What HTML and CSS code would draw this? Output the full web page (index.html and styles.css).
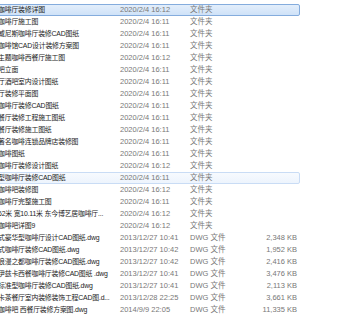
FILE: index.html
```html
<!DOCTYPE html>
<html lang="zh-CN">
<head>
    <meta charset="UTF-8">
    <title>咖啡厅图纸</title>
    <link rel="stylesheet" href="styles.css">
</head>
<body>
    <div class="file-list">
        <div class="row selected"><span class="name">咖啡厅装修详图</span><span class="date">2020/2/4 16:12</span><span class="type">文件夹</span><span class="size"></span></div>
        <div class="row"><span class="name">咖啡厅施工图</span><span class="date">2020/2/4 16:11</span><span class="type">文件夹</span><span class="size"></span></div>
        <div class="row"><span class="name">威尼斯咖啡厅装修CAD图纸</span><span class="date">2020/2/4 16:11</span><span class="type">文件夹</span><span class="size"></span></div>
        <div class="row"><span class="name">咖啡馆CAD设计装修方案图</span><span class="date">2020/2/4 16:11</span><span class="type">文件夹</span><span class="size"></span></div>
        <div class="row"><span class="name">主题咖啡西餐厅施工图</span><span class="date">2020/2/4 16:12</span><span class="type">文件夹</span><span class="size"></span></div>
        <div class="row"><span class="name">吧立面</span><span class="date">2020/2/4 16:11</span><span class="type">文件夹</span><span class="size"></span></div>
        <div class="row"><span class="name">厅酒吧室内设计图纸</span><span class="date">2020/2/4 16:11</span><span class="type">文件夹</span><span class="size"></span></div>
        <div class="row"><span class="name">厅装修平面图</span><span class="date">2020/2/4 16:11</span><span class="type">文件夹</span><span class="size"></span></div>
        <div class="row"><span class="name">咖啡厅装修CAD图纸</span><span class="date">2020/2/4 16:11</span><span class="type">文件夹</span><span class="size"></span></div>
        <div class="row"><span class="name">餐厅装修工程施工图纸</span><span class="date">2020/2/4 16:11</span><span class="type">文件夹</span><span class="size"></span></div>
        <div class="row"><span class="name">餐厅装修施工图纸</span><span class="date">2020/2/4 16:11</span><span class="type">文件夹</span><span class="size"></span></div>
        <div class="row"><span class="name">著名咖啡连锁品牌店装修图</span><span class="date">2020/2/4 16:11</span><span class="type">文件夹</span><span class="size"></span></div>
        <div class="row"><span class="name">咖啡图纸</span><span class="date">2020/2/4 16:11</span><span class="type">文件夹</span><span class="size"></span></div>
        <div class="row"><span class="name">咖啡厅装修设计图纸</span><span class="date">2020/2/4 16:12</span><span class="type">文件夹</span><span class="size"></span></div>
        <div class="row hover"><span class="name">型咖啡厅装修CAD图纸</span><span class="date">2020/2/4 16:11</span><span class="type">文件夹</span><span class="size"></span></div>
        <div class="row"><span class="name">咖啡吧装修图</span><span class="date">2020/2/4 16:12</span><span class="type">文件夹</span><span class="size"></span></div>
        <div class="row"><span class="name">咖啡厅完整施工图</span><span class="date">2020/2/4 16:11</span><span class="type">文件夹</span><span class="size"></span></div>
        <div class="row"><span class="name">62米 宽10.11米 东今博艺居咖啡厅...</span><span class="date">2020/2/4 16:12</span><span class="type">文件夹</span><span class="size"></span></div>
        <div class="row"><span class="name">咖啡吧详图9</span><span class="date">2020/2/4 16:12</span><span class="type">文件夹</span><span class="size"></span></div>
        <div class="row"><span class="name">式豪华型咖啡厅设计CAD图纸.dwg</span><span class="date">2013/12/27 10:41</span><span class="type">DWG 文件</span><span class="size">2,348 KB</span></div>
        <div class="row"><span class="name">式咖啡厅装修CAD图纸.dwg</span><span class="date">2013/12/27 10:42</span><span class="type">DWG 文件</span><span class="size">1,952 KB</span></div>
        <div class="row"><span class="name">浪漫之都咖啡厅装修CAD图纸.dwg</span><span class="date">2013/12/27 10:42</span><span class="type">DWG 文件</span><span class="size">2,416 KB</span></div>
        <div class="row"><span class="name">伊兹卡西餐咖啡厅装修CAD图纸 .dwg</span><span class="date">2013/12/27 10:41</span><span class="type">DWG 文件</span><span class="size">3,476 KB</span></div>
        <div class="row"><span class="name">标准型咖啡厅装修CAD图纸.dwg</span><span class="date">2013/12/27 10:41</span><span class="type">DWG 文件</span><span class="size">2,113 KB</span></div>
        <div class="row"><span class="name">卡茶餐厅室内装修装饰工程CAD图.d...</span><span class="date">2013/12/28 22:25</span><span class="type">DWG 文件</span><span class="size">3,661 KB</span></div>
        <div class="row"><span class="name">咖啡吧 西餐厅装修方案图.dwg</span><span class="date">2014/9/9 22:05</span><span class="type">DWG 文件</span><span class="size">11,335 KB</span></div>
    </div>
</body>
</html>
```

FILE: styles.css
```css
body {
    margin: 0;
    padding: 0;
    background-color: #fff;
    overflow: hidden;
    font-family: "Liberation Sans", "Noto Sans CJK SC", sans-serif;
    font-size: 7.5px;
}

.file-list {
    padding-top: 4px;
}

.row {
    display: grid;
    grid-template-columns: 122px 70px 52px 55px;
    align-items: center;
    box-sizing: border-box;
    width: 310px;
    height: 12px;
    margin-left: -10px;
    padding: 0 2px 0 7px;
    border: 1px solid transparent;
    border-radius: 2px;
    line-height: 10px;
    white-space: nowrap;
}

.row.selected {
    background: linear-gradient(#e3eefb, #cfe2f8);
    border-color: #84acdd;
}

.row.hover {
    background: linear-gradient(#f7fafe, #edf4fd);
    border-color: #c9dcf5;
}

.name {
    color: #1c1c1c;
    font-size: 6.9px;
    letter-spacing: -0.2px;
    overflow: hidden;
    padding-right: 2px;
}

.date,
.type,
.size {
    color: #787878;
}

.size {
    text-align: right;
}
```
